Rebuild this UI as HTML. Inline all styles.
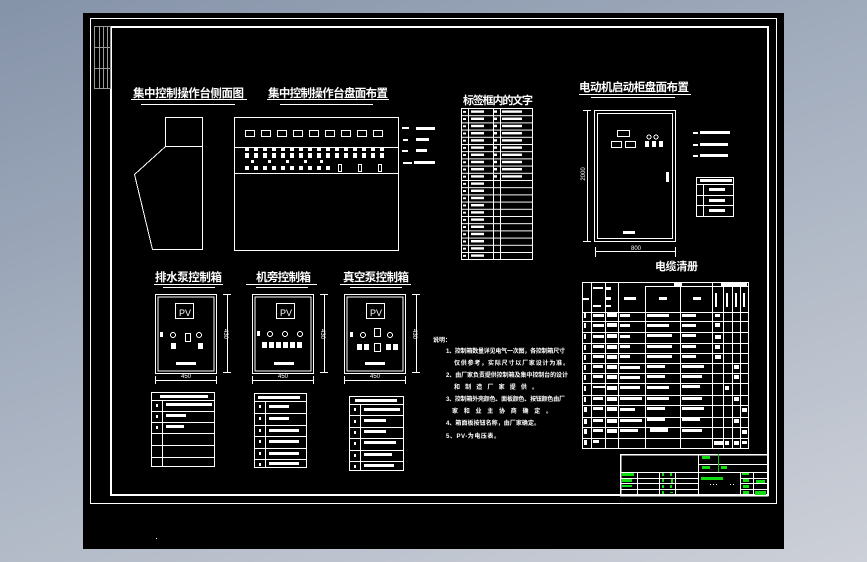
<!DOCTYPE html>
<html><head><meta charset="utf-8"><style>
html,body{margin:0;padding:0;width:867px;height:562px;overflow:hidden;background:linear-gradient(160deg,#8593a9 0%,#a9b3c2 50%,#cdd0d8 100%);}
svg{position:absolute;left:0;top:0}
text{font-family:"Liberation Sans","Noto Sans CJK SC",sans-serif;fill:#fff}
.t{font-family:"Noto Sans CJK SC","WenQuanYi Zen Hei",sans-serif;font-weight:bold}
</style></head><body>
<svg width="867" height="562" viewBox="0 0 867 562" shape-rendering="crispEdges">
<defs>
<pattern id="lt" x="461" y="108" width="72" height="7.2" patternUnits="userSpaceOnUse">
<rect x="0" y="0" width="72" height="1" fill="#fff"/>
<rect x="2" y="3" width="3" height="2" fill="#fff"/>
<rect x="10" y="2.5" width="13" height="2.5" fill="#fff"/>
</pattern>
<pattern id="rw" x="461" y="108" width="72" height="7.2" patternUnits="userSpaceOnUse">
<rect x="33" y="2.5" width="3" height="2.5" fill="#fff"/>
<rect x="41" y="2.5" width="20" height="2.5" fill="#fff"/>
</pattern>
</defs>
<rect x="83" y="13" width="701" height="536" fill="#000"/>
<g fill="none" stroke="#fff">
<rect x="90.5" y="18.5" width="686" height="485" stroke-width="1"/>
<rect x="111" y="27" width="657" height="468" stroke-width="1.6"/>
</g>
<g fill="none" stroke="#9a9a9a" stroke-width="1">
<rect x="94.5" y="26.5" width="16" height="62"/>
<path d="M99.5 26v62M103.5 26v62M107.5 26v62M94 47.5h16M94 68.5h16"/>
</g>
<rect x="156" y="538" width="1" height="1" fill="#fff"/>

<!-- titles -->
<text class="t" x="133" y="97" font-size="11.5" textLength="111">集中控制操作台侧面图</text>
<text class="t" x="268" y="97" font-size="11.5" textLength="120">集中控制操作台盘面布置</text>
<text class="t" x="463" y="104" font-size="11" textLength="70">标签框内的文字</text>
<text class="t" x="579" y="91" font-size="11.5" textLength="110">电动机启动柜盘面布置</text>
<text class="t" x="655" y="270" font-size="11" textLength="43">电缆清册</text>
<text class="t" x="155" y="281" font-size="11.5" textLength="67">排水泵控制箱</text>
<text class="t" x="256" y="281" font-size="11.5" textLength="55">机旁控制箱</text>
<text class="t" x="343" y="281" font-size="11.5" textLength="66">真空泵控制箱</text>
<g stroke="#fff" stroke-width="1" fill="none">
<path d="M131 99.5h116M141 104.5h94M267 99.5h122M280 104.5h93M579 94.5h112M591 97.5h84M154 284.5h69M163 287.5h52M246 284.5h71M256 287.5h52M340 284.5h71M350 287.5h52"/>
<!-- side view -->
<rect x="165.5" y="117.5" width="37" height="29"/>
<path d="M165.5 146.5L134.5 174.5L152.5 249.5H202.5V146.5"/>
<!-- panel -->
<rect x="234.5" y="117.5" width="164" height="133"/>
<path d="M234 147.5h164M234 173.5h164"/>
<rect x="245.5" y="130.5" width="9" height="6"/><rect x="261.5" y="130.5" width="9" height="6"/><rect x="277.5" y="130.5" width="9" height="6"/><rect x="293.5" y="130.5" width="9" height="6"/><rect x="309.5" y="130.5" width="9" height="6"/><rect x="325.5" y="130.5" width="9" height="6"/><rect x="341.5" y="130.5" width="9" height="6"/><rect x="357.5" y="130.5" width="9" height="6"/><rect x="373.5" y="130.5" width="9" height="6"/>
<rect x="338.5" y="164.5" width="3" height="7"/><rect x="358.5" y="164.5" width="3" height="7"/><rect x="378.5" y="164.5" width="3" height="7"/>
</g>
<g fill="#fff">
<!-- panel icons rows -->
<rect x="245" y="148" width="4" height="3"/><rect x="254" y="148" width="4" height="3"/><rect x="263" y="148" width="4" height="3"/><rect x="272" y="148" width="4" height="3"/><rect x="281" y="148" width="4" height="3"/><rect x="290" y="148" width="4" height="3"/><rect x="299" y="148" width="4" height="3"/><rect x="308" y="148" width="4" height="3"/><rect x="317" y="148" width="4" height="3"/><rect x="326" y="148" width="4" height="3"/><rect x="335" y="148" width="4" height="3"/><rect x="344" y="148" width="4" height="3"/><rect x="353" y="148" width="4" height="3"/><rect x="362" y="148" width="4" height="3"/><rect x="371" y="148" width="4" height="3"/><rect x="380" y="148" width="4" height="3"/>
<rect x="245" y="153" width="4" height="5"/><rect x="254" y="153" width="4" height="5"/><rect x="263" y="153" width="4" height="5"/><rect x="272" y="153" width="4" height="5"/><rect x="281" y="153" width="4" height="5"/><rect x="290" y="153" width="4" height="5"/><rect x="299" y="153" width="4" height="5"/><rect x="308" y="153" width="4" height="5"/><rect x="317" y="153" width="4" height="5"/><rect x="326" y="153" width="4" height="5"/><rect x="335" y="153" width="4" height="5"/><rect x="344" y="153" width="4" height="5"/><rect x="353" y="153" width="4" height="5"/><rect x="362" y="153" width="4" height="5"/><rect x="371" y="153" width="4" height="5"/><rect x="380" y="153" width="4" height="5"/>
<rect x="251" y="160" width="3" height="3"/><rect x="268" y="160" width="3" height="3"/><rect x="286" y="160" width="3" height="3"/><rect x="304" y="160" width="3" height="3"/><rect x="320" y="160" width="3" height="3"/>
<rect x="245" y="166" width="4" height="4"/><rect x="254" y="166" width="4" height="4"/><rect x="263" y="166" width="4" height="4"/><rect x="272" y="166" width="4" height="4"/><rect x="281" y="166" width="4" height="4"/><rect x="290" y="166" width="4" height="4"/><rect x="299" y="166" width="4" height="4"/><rect x="308" y="166" width="4" height="4"/><rect x="317" y="166" width="4" height="4"/><rect x="326" y="166" width="4" height="4"/>
<!-- legend -->
<rect x="402" y="127" width="7" height="2"/><rect x="416" y="127" width="19" height="3"/>
<rect x="403" y="139" width="5" height="2"/><rect x="416" y="138" width="13" height="3"/>
<rect x="402" y="150" width="6" height="2"/><rect x="416" y="149" width="11" height="3"/>
<rect x="403" y="162" width="9" height="2"/><rect x="414" y="161" width="21" height="3"/>
</g>

<!-- label table -->
<rect x="461" y="108" width="72" height="151" fill="url(#lt)"/>
<rect x="461" y="108" width="72" height="72" fill="url(#rw)"/>
<g stroke="#fff" fill="none">
<rect x="461.5" y="108.5" width="71" height="151"/>
<path d="M468.5 108v151M493.5 108v151M500.5 108v151"/>
</g>

<!-- motor cabinet -->
<g stroke="#fff" fill="none">
<rect x="594.5" y="110.5" width="81" height="131"/>
<rect x="597.5" y="113.5" width="75" height="125"/>
<path d="M587.5 110v132M583 110.5h8M583 241.5h8M595.5 247v10M675.5 247v10M595 251.5h81"/>
<rect x="617.5" y="130.5" width="12" height="6"/>
<rect x="611.5" y="141.5" width="10" height="6"/><rect x="625.5" y="141.5" width="10" height="6"/>
<circle cx="649" cy="137" r="2"/><circle cx="656" cy="137" r="2"/>
<rect x="696.5" y="177.5" width="37" height="39"/>
<path d="M696 184.5h38M696 195.5h38M696 205.5h38M703.5 184v33"/>
</g>
<g fill="#fff">
<rect x="645" y="141" width="4" height="6"/><rect x="652" y="141" width="4" height="6"/><rect x="659" y="141" width="4" height="6"/>
<rect x="666" y="172" width="3" height="10"/>
<rect x="693" y="132" width="5" height="2"/><rect x="700" y="131" width="30" height="3"/>
<rect x="693" y="144" width="5" height="2"/><rect x="700" y="143" width="28" height="3"/>
<rect x="693" y="155" width="5" height="2"/><rect x="700" y="154" width="28" height="3"/>
<rect x="700" y="179" width="32" height="3"/><rect x="709" y="188" width="16" height="3"/><rect x="709" y="199" width="16" height="3"/><rect x="709" y="209" width="16" height="3"/>
<rect x="623" y="231" width="12" height="3"/>
</g>
<text x="636" y="250" font-size="6" text-anchor="middle">800</text>
<text x="0" y="0" font-size="6" text-anchor="middle" transform="translate(585,174) rotate(-90)">2000</text>

<!-- three boxes -->
<g stroke="#fff" fill="none">
<rect x="155.5" y="294.5" width="61" height="79"/><rect x="158" y="297" width="56" height="74"/>
<rect x="175.5" y="303.5" width="18" height="15"/>
<path d="M227.5 294v79M223 294.5h8M223 372.5h8M155.5 376v8M216.5 376v8M155 380.5h62"/>
<rect x="252.5" y="294.5" width="61" height="79"/><rect x="255" y="297" width="56" height="74"/>
<rect x="276.5" y="303.5" width="18" height="15"/>
<path d="M324.5 294v79M320 294.5h8M320 372.5h8M252.5 376v8M313.5 376v8M252 380.5h62"/>
<rect x="344.5" y="294.5" width="61" height="79"/><rect x="347" y="297" width="56" height="74"/>
<rect x="366.5" y="303.5" width="18" height="15"/>
<path d="M416.5 294v79M412 294.5h8M412 372.5h8M344.5 376v8M405.5 376v8M344 380.5h62"/>
<circle cx="173" cy="335" r="2.5"/><circle cx="199" cy="335" r="2.5"/><rect x="185.5" y="333.5" width="5" height="8"/>
<circle cx="270" cy="334" r="2.5"/><circle cx="285" cy="334" r="2.5"/><circle cx="300" cy="334" r="2.5"/>
<circle cx="363" cy="335" r="2.5"/><circle cx="390" cy="335" r="2.5"/><rect x="374.5" y="328.5" width="6" height="8"/><rect x="374.5" y="343.5" width="6" height="8"/>
</g>
<g font-size="9">
<text x="179" y="316">PV</text><text x="280" y="316">PV</text><text x="370" y="316">PV</text>
</g>
<g fill="#fff">
<rect x="160" y="332" width="3" height="5"/><rect x="257" y="331" width="3" height="5"/><rect x="350" y="332" width="3" height="5"/>
<rect x="171" y="343" width="5" height="6"/><rect x="198" y="343" width="5" height="6"/>
<rect x="262" y="342" width="5" height="6"/><rect x="269" y="342" width="5" height="6"/><rect x="276" y="342" width="5" height="6"/><rect x="283" y="342" width="5" height="6"/><rect x="290" y="342" width="5" height="6"/><rect x="297" y="342" width="5" height="6"/>
<rect x="357" y="344" width="5" height="6"/><rect x="364" y="344" width="5" height="6"/><rect x="386" y="344" width="5" height="6"/><rect x="393" y="344" width="5" height="6"/>
<rect x="176" y="362" width="20" height="3"/><rect x="274" y="362" width="20" height="3"/><rect x="365" y="362" width="20" height="3"/>
</g>
<g font-size="6"><text x="181" y="378">450</text><text x="278" y="378">450</text><text x="370" y="378">450</text></g>
<g font-size="6" text-anchor="middle">
<text transform="translate(224,334) rotate(90)">430</text><text transform="translate(321,334) rotate(90)">430</text><text transform="translate(413,334) rotate(90)">430</text>
</g>

<!-- small tables -->
<g stroke="#fff" fill="none">
<rect x="151.5" y="392.5" width="63" height="74"/><path d="M151 400.5h64M151 411.5h64M151 422.5h64M151 433.5h64M151 445.5h64M151 457.5h64M162.5 400v67"/>
<rect x="254.5" y="393.5" width="52" height="74"/><path d="M254 401.5h53M254 413.5h53M254 425.5h53M254 436.5h53M254 448.5h53M254 459.5h53M265.5 401v67"/>
<rect x="349.5" y="396.5" width="54" height="74"/><path d="M349 404.5h55M349 415.5h55M349 427.5h55M349 438.5h55M349 450.5h55M349 461.5h55M360.5 404v67"/>
</g>
<g fill="#fff">
<rect x="160" y="395" width="48" height="3"/><rect x="156" y="404" width="2" height="3"/><rect x="166" y="403" width="46" height="3"/><rect x="156" y="415" width="2" height="3"/><rect x="166" y="414" width="20" height="3"/><rect x="156" y="426" width="2" height="3"/><rect x="166" y="425" width="18" height="3"/>
<rect x="258" y="396" width="42" height="3"/>
<rect x="259" y="405" width="2" height="3"/><rect x="269" y="405" width="20" height="3"/>
<rect x="259" y="417" width="2" height="3"/><rect x="269" y="417" width="20" height="3"/>
<rect x="259" y="429" width="2" height="3"/><rect x="269" y="429" width="30" height="3"/>
<rect x="259" y="440" width="2" height="3"/><rect x="269" y="440" width="30" height="3"/>
<rect x="259" y="452" width="2" height="3"/><rect x="269" y="452" width="30" height="3"/>
<rect x="259" y="463" width="2" height="3"/><rect x="269" y="462" width="30" height="3"/>
<rect x="355" y="399" width="42" height="3"/>
<rect x="354" y="408" width="2" height="3"/><rect x="364" y="408" width="36" height="3"/>
<rect x="354" y="420" width="2" height="3"/><rect x="364" y="419" width="22" height="3"/>
<rect x="354" y="431" width="2" height="3"/><rect x="364" y="430" width="22" height="3"/>
<rect x="354" y="442" width="2" height="3"/><rect x="364" y="441" width="32" height="3"/>
<rect x="354" y="454" width="2" height="3"/><rect x="364" y="453" width="28" height="3"/>
<rect x="354" y="465" width="2" height="3"/><rect x="364" y="464" width="30" height="3"/>
</g>

<!-- notes -->
<g font-size="6" class="t">
<text x="433" y="342">说明：</text>
<text x="446" y="353" textLength="119">1、控制箱数量详见电气一次图，各控制箱尺寸</text>
<text x="454" y="365" textLength="115">仅供参考，实际尺寸以厂家设计为准。</text>
<text x="446" y="377" textLength="122">2、由厂家负责提供控制箱及集中控制台的设计</text>
<text x="454" y="389" textLength="84">和制造厂家提供。</text>
<text x="446" y="401" textLength="119">3、控制箱外壳颜色、面板颜色、按钮颜色由厂</text>
<text x="452" y="413" textLength="100">家和业主协商确定。</text>
<text x="446" y="425" textLength="94">4、箱面板按钮名称，由厂家确定。</text>
<text x="446" y="438" textLength="54">5、PV-为电压表。</text>
</g>

<!-- cable table -->
<g stroke="#fff" fill="none">
<rect x="582.5" y="282.5" width="166" height="166"/>
<path d="M645 286.5h104M582 312.5h167M582 321.5h167M582 332.5h167M582 343.5h167M582 353.5h167M582 363.5h167M582 373.5h167M582 383.5h167M582 395.5h167M582 405.5h167M582 417.5h167M582 427.5h167M582 438.5h167"/>
<path d="M591.5 282v167M605.5 282v167M618.5 282v167M645.5 286v163M680.5 286v163M712.5 282v167M723.5 286v163M732.5 286v163M740.5 286v163"/>
</g>
<g fill="#fff">
<rect x="674" y="283" width="8" height="3"/><rect x="721" y="283" width="26" height="3"/>
<rect x="593" y="287" width="10" height="2"/><rect x="606" y="287" width="5" height="3"/><rect x="606" y="297" width="5" height="3"/><rect x="606" y="305" width="5" height="2"/><rect x="583" y="298" width="6" height="2"/><rect x="593" y="305" width="8" height="2"/>
<rect x="624" y="297" width="12" height="3"/><rect x="659" y="297" width="8" height="3"/><rect x="693" y="297" width="8" height="3"/>
<rect x="715" y="293" width="2" height="14"/><rect x="726" y="293" width="2" height="14"/><rect x="735" y="293" width="2" height="14"/><rect x="743" y="293" width="2" height="14"/>
</g>
<g fill="#fff">
<rect x="584" y="313" width="2" height="5"/><rect x="593" y="314" width="11" height="3"/><rect x="607" y="313" width="10" height="4"/><rect x="620" y="314" width="10" height="3"/><rect x="647" y="314" width="22" height="3"/><rect x="682" y="314" width="14" height="3"/><rect x="715" y="314" width="5" height="3"/>
<rect x="584" y="323" width="2" height="5"/><rect x="593" y="324" width="11" height="3"/><rect x="607" y="323" width="10" height="4"/><rect x="620" y="324" width="10" height="3"/><rect x="647" y="324" width="22" height="3"/><rect x="682" y="324" width="14" height="3"/><rect x="715" y="323" width="5" height="4"/>
<rect x="584" y="334" width="2" height="5"/><rect x="593" y="335" width="11" height="3"/><rect x="607" y="334" width="10" height="4"/><rect x="620" y="335" width="10" height="3"/><rect x="647" y="334" width="25" height="3"/><rect x="682" y="334" width="14" height="3"/><rect x="715" y="335" width="6" height="4"/>
<rect x="584" y="345" width="2" height="5"/><rect x="593" y="345" width="11" height="3"/><rect x="607" y="345" width="10" height="4"/><rect x="620" y="345" width="10" height="3"/><rect x="647" y="345" width="25" height="3"/><rect x="682" y="345" width="14" height="3"/><rect x="715" y="345" width="5" height="4"/>
<rect x="584" y="355" width="2" height="5"/><rect x="593" y="355" width="11" height="3"/><rect x="607" y="355" width="10" height="4"/><rect x="620" y="355" width="10" height="3"/><rect x="647" y="355" width="25" height="3"/><rect x="682" y="355" width="14" height="3"/><rect x="715" y="355" width="6" height="4"/>
<rect x="584" y="365" width="2" height="5"/><rect x="593" y="365" width="10" height="3"/><rect x="607" y="365" width="10" height="4"/><rect x="620" y="366" width="20" height="3"/><rect x="647" y="365" width="18" height="3"/><rect x="682" y="365" width="22" height="3"/><rect x="734" y="365" width="5" height="4"/>
<rect x="584" y="375" width="2" height="5"/><rect x="593" y="375" width="10" height="3"/><rect x="607" y="375" width="10" height="4"/><rect x="620" y="376" width="20" height="3"/><rect x="647" y="375" width="18" height="3"/><rect x="682" y="375" width="20" height="3"/><rect x="734" y="375" width="5" height="4"/>
<rect x="584" y="386" width="2" height="5"/><rect x="593" y="386" width="12" height="2"/><rect x="607" y="386" width="10" height="4"/><rect x="620" y="386" width="20" height="3"/><rect x="647" y="386" width="22" height="3"/><rect x="682" y="385" width="18" height="3"/><rect x="725" y="386" width="4" height="4"/>
<rect x="584" y="397" width="2" height="5"/><rect x="593" y="397" width="10" height="3"/><rect x="607" y="397" width="10" height="4"/><rect x="620" y="397" width="22" height="3"/><rect x="647" y="397" width="22" height="3"/><rect x="682" y="397" width="20" height="3"/><rect x="734" y="397" width="5" height="4"/>
<rect x="584" y="407" width="3" height="5"/><rect x="593" y="407" width="10" height="3"/><rect x="607" y="407" width="10" height="4"/><rect x="620" y="408" width="15" height="3"/><rect x="647" y="407" width="18" height="3"/><rect x="682" y="407" width="22" height="3"/><rect x="742" y="408" width="5" height="4"/>
<rect x="584" y="419" width="3" height="5"/><rect x="593" y="419" width="10" height="3"/><rect x="607" y="419" width="10" height="4"/><rect x="620" y="419" width="22" height="3"/><rect x="647" y="418" width="18" height="3"/><rect x="682" y="418" width="18" height="3"/><rect x="734" y="419" width="5" height="4"/>
<rect x="584" y="429" width="3" height="5"/><rect x="593" y="429" width="10" height="3"/><rect x="607" y="429" width="10" height="4"/><rect x="620" y="429" width="18" height="3"/><rect x="650" y="428" width="18" height="4"/><rect x="682" y="429" width="20" height="3"/><rect x="742" y="430" width="5" height="4"/>
<rect x="584" y="440" width="3" height="5"/><rect x="593" y="440" width="6" height="3"/><rect x="714" y="441" width="9" height="4"/><rect x="725" y="441" width="4" height="4"/><rect x="734" y="441" width="5" height="4"/><rect x="742" y="441" width="5" height="3"/>
</g>

<!-- title block -->
<g stroke="#fff" fill="none">
<rect x="620.5" y="454.5" width="147" height="41" stroke-width="1.5"/>
<path d="M698.5 454v18M620 472.5h148M698 464.5h70M620 478.5h78M620 483.5h78M620 489.5h78M740 478.5h28M740 483.5h28M740 489.5h28M637.5 472v23M659.5 472v23M675.5 472v23M698.5 472v23M740.5 472v23M753.5 472v23"/>
</g>
<path d="M718.5 454v18" stroke="#0c0" stroke-width="1"/>
<g fill="#1d1">
<rect x="702" y="456" width="8" height="3"/><rect x="702" y="466" width="8" height="3"/><rect x="721" y="466" width="6" height="3"/>
<rect x="622" y="473" width="12" height="3"/><rect x="622" y="479" width="10" height="3"/><rect x="622" y="485" width="10" height="2"/>
<rect x="662" y="473" width="2" height="3"/><rect x="670" y="473" width="2" height="3"/><rect x="662" y="479" width="2" height="3"/><rect x="671" y="479" width="2" height="4"/><rect x="662" y="485" width="2" height="3"/><rect x="670" y="485" width="2" height="3"/><rect x="662" y="491" width="2" height="3"/><rect x="670" y="492" width="3" height="1"/>
<rect x="701" y="477" width="22" height="3"/>
<rect x="742" y="473" width="7" height="2"/><rect x="743" y="479" width="6" height="3"/><rect x="743" y="485" width="6" height="3"/><rect x="743" y="491" width="6" height="3"/><rect x="756" y="480" width="9" height="3"/><rect x="755" y="491" width="11" height="4"/>
</g>
<g fill="#fff"><rect x="710" y="484" width="1" height="1"/><rect x="713" y="484" width="1" height="1"/><rect x="716" y="484" width="1" height="1"/><rect x="730" y="484" width="1" height="1"/><rect x="733" y="484" width="1" height="1"/></g>
</svg>
</body></html>
